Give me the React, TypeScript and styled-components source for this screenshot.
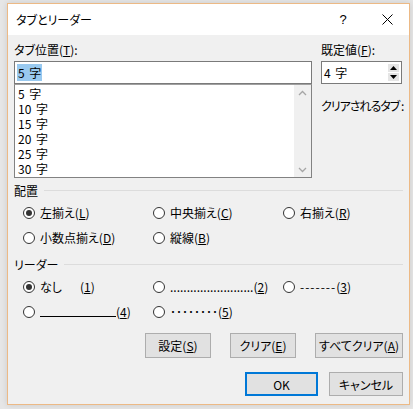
import React from 'react';
import styled, { createGlobalStyle } from 'styled-components';

const GlobalStyle = createGlobalStyle`
  html, body {
    margin: 0;
    padding: 0;
    background: #e6e6e6;
  }
  body {
    font-family: 'Noto Sans CJK JP', 'Noto Sans', sans-serif;
    font-size: 12px;
    color: #000;
    font-feature-settings: 'palt';
  }
`;

const Page = styled.div`
  box-sizing: border-box;
  width: 413px;
  height: 409px;
  padding: 3px 0 0 7px;
`;

const Window = styled.div`
  box-sizing: border-box;
  width: 403px;
  height: 402px;
  border: 1px solid #ecb985;
  background: #f0f0f0;
  display: flex;
  flex-direction: column;
  box-shadow: 0 0 6px rgba(0, 0, 0, 0.12);
`;

const TitleBar = styled.div`
  height: 31px;
  background: #fff;
  display: flex;
  align-items: center;
  padding-left: 8px;
`;

const Title = styled.div`
  flex: 1;
  line-height: 16px;
`;

const CaptionButton = styled.div`
  width: 44px;
  height: 31px;
  display: flex;
  align-items: center;
  justify-content: center;
  font-family: 'Liberation Sans', sans-serif;
  font-size: 13px;
`;

const Body = styled.div`
  padding: 7px 6px 0 6px;
  display: flex;
  flex-direction: column;
`;

const TopArea = styled.div`
  display: grid;
  grid-template-columns: 298px 81px;
  column-gap: 9px;
`;

const Column = styled.div`
  display: flex;
  flex-direction: column;
`;

const Label = styled.div<{ $gap?: number; $tight?: boolean }>`
  line-height: 16px;
  height: 16px;
  margin-top: ${(p) => p.$gap ?? 0}px;
  margin-bottom: 3px;
  white-space: nowrap;
  letter-spacing: ${(p) => (p.$tight ? '-1px' : 'normal')};
`;

const TextBox = styled.div`
  box-sizing: border-box;
  height: 23px;
  border: 1px solid #7a7a7a;
  background: #fff;
  display: flex;
  align-items: center;
  padding-left: 2px;
  word-spacing: 2px;
`;

const Selected = styled.span`
  background: #99c9ef;
  line-height: 17px;
  padding: 0 1px;
`;

const ListBox = styled.div`
  box-sizing: border-box;
  height: 94px;
  border: 1px solid #828282;
  border-top-color: #a0a0a0;
  background: #fff;
  display: flex;
`;

const ListItems = styled.div`
  flex: 1;
  padding: 1px 0 0 3px;
  word-spacing: 2px;
`;

const ListItem = styled.div`
  line-height: 15px;
  height: 15px;
`;

const ScrollBar = styled.div`
  width: 17px;
  background: #f0f0f0;
  display: flex;
  flex-direction: column;
  justify-content: space-between;
  align-items: center;
  padding: 5px 0 4px;
`;

const SpinBox = styled(TextBox)`
  justify-content: space-between;
  padding-right: 2px;
`;

const SpinButtons = styled.div`
  display: flex;
  flex-direction: column;
  gap: 1px;
`;

const SpinButton = styled.div`
  width: 11px;
  height: 8px;
  background: #e5e5e5;
  display: flex;
  align-items: center;
  justify-content: center;
`;

const SectionHead = styled.div<{ $gap: number }>`
  display: flex;
  align-items: center;
  gap: 6px;
  margin-top: ${(p) => p.$gap}px;
  line-height: 16px;
  height: 16px;

  &::after {
    content: '';
    flex: 1;
    height: 1px;
    margin-top: -2px;
    background: #dcdcdc;
  }
`;

const RadioGrid = styled.div`
  display: grid;
  grid-template-columns: 130px 130px 130px;
  grid-auto-rows: 25px;
  padding-left: 9px;
  margin-top: 1px;
`;

const RadioItem = styled.label`
  display: flex;
  align-items: center;
  gap: 5px;
  white-space: nowrap;
`;

const RadioCircle = styled.span<{ $checked?: boolean }>`
  box-sizing: border-box;
  width: 12px;
  height: 12px;
  border-radius: 50%;
  border: 1px solid #333;
  background: #fff;
  display: flex;
  align-items: center;
  justify-content: center;

  &::after {
    content: '';
    display: ${(p) => (p.$checked ? 'block' : 'none')};
    width: 6px;
    height: 6px;
    border-radius: 50%;
    background: #333;
  }
`;

const Gap = styled.span<{ $width: number }>`
  display: inline-block;
  width: ${(p) => p.$width}px;
`;

const Leader = styled.span<{ $spacing?: number }>`
  letter-spacing: ${(p) => p.$spacing ?? 0}px;
`;

const Rule = styled.span<{ $width: number }>`
  display: inline-block;
  width: ${(p) => p.$width}px;
  height: 11px;
  border-bottom: 1px solid #000;
  vertical-align: baseline;
`;

const ButtonRow = styled.div<{ $gap: number; $top: number }>`
  display: flex;
  justify-content: flex-end;
  gap: ${(p) => p.$gap}px;
  margin-top: ${(p) => p.$top}px;
`;

const Button = styled.div<{ $width: number; $height: number; $default?: boolean }>`
  box-sizing: border-box;
  width: ${(p) => p.$width}px;
  height: ${(p) => p.$height}px;
  background: #e1e1e1;
  border: ${(p) => (p.$default ? '2px solid #0078d7' : '1px solid #adadad')};
  display: flex;
  align-items: center;
  justify-content: center;
  white-space: nowrap;
`;

const Chevron = ({ up }: { up?: boolean }) => (
  <svg width="9" height="6" viewBox="0 0 9 6">
    <path
      d={up ? 'M1 5 L4.5 1.5 L8 5' : 'M1 1 L4.5 4.5 L8 1'}
      fill="none"
      stroke="#a6a6a6"
      strokeWidth="1.3"
    />
  </svg>
);

const Triangle = ({ up }: { up?: boolean }) => (
  <svg width="7" height="4" viewBox="0 0 7 4">
    <path d={up ? 'M0 4 L3.5 0 L7 4 Z' : 'M0 0 L3.5 4 L7 0 Z'} fill="#000" />
  </svg>
);

const CloseIcon = () => (
  <svg width="11" height="11" viewBox="0 0 11 11">
    <path d="M0.5 0.5 L10.5 10.5 M10.5 0.5 L0.5 10.5" stroke="#000" strokeWidth="1" />
  </svg>
);

const Radio = ({ checked, children }: { checked?: boolean; children: React.ReactNode }) => (
  <RadioItem>
    <RadioCircle $checked={checked} />
    <span>{children}</span>
  </RadioItem>
);

const stops = ['5 字', '10 字', '15 字', '20 字', '25 字', '30 字'];

const App = () => {
  return (
    <Page>
      <GlobalStyle />
      <Window>
        <TitleBar>
          <Title>タブとリーダー</Title>
          <CaptionButton>?</CaptionButton>
          <CaptionButton>
            <CloseIcon />
          </CaptionButton>
        </TitleBar>
        <Body>
          <TopArea>
            <Column>
              <Label>
                タブ位置(<u>T</u>):
              </Label>
              <TextBox>
                <Selected>5 字</Selected>
              </TextBox>
              <ListBox>
                <ListItems>
                  {stops.map((s) => (
                    <ListItem key={s}>{s}</ListItem>
                  ))}
                </ListItems>
                <ScrollBar>
                  <Chevron up />
                  <Chevron />
                </ScrollBar>
              </ListBox>
            </Column>
            <Column>
              <Label>
                既定値(<u>F</u>):
              </Label>
              <SpinBox>
                <span>4 字</span>
                <SpinButtons>
                  <SpinButton>
                    <Triangle up />
                  </SpinButton>
                  <SpinButton>
                    <Triangle />
                  </SpinButton>
                </SpinButtons>
              </SpinBox>
              <Label $gap={14} $tight>
                クリアされるタブ :
              </Label>
            </Column>
          </TopArea>

          <SectionHead $gap={5}>配置</SectionHead>
          <RadioGrid>
            <Radio checked>
              左揃え(<u>L</u>)
            </Radio>
            <Radio>
              中央揃え(<u>C</u>)
            </Radio>
            <Radio>
              右揃え(<u>R</u>)
            </Radio>
            <Radio>
              小数点揃え(<u>D</u>)
            </Radio>
            <Radio>
              縦線(<u>B</u>)
            </Radio>
          </RadioGrid>

          <SectionHead $gap={7}>リーダー</SectionHead>
          <RadioGrid>
            <Radio checked>
              なし<Gap $width={18} />(<u>1</u>)
            </Radio>
            <Radio>
              <Leader>{'.'.repeat(25)}</Leader>(<u>2</u>)
            </Radio>
            <Radio>
              <Leader $spacing={1}>{'-'.repeat(7)}</Leader>(<u>3</u>)
            </Radio>
            <Radio>
              <Rule $width={76} />(<u>4</u>)
            </Radio>
            <Radio>
              <Leader>{'･'.repeat(8)}</Leader>(<u>5</u>)
            </Radio>
          </RadioGrid>

          <ButtonRow $gap={19} $top={9}>
            <Button $width={66} $height={25}>
              設定(<u>S</u>)
            </Button>
            <Button $width={66} $height={25}>
              クリア(<u>E</u>)
            </Button>
            <Button $width={88} $height={25}>
              すべてクリア(<u>A</u>)
            </Button>
          </ButtonRow>
          <ButtonRow $gap={11} $top={14}>
            <Button $width={73} $height={24} $default>
              OK
            </Button>
            <Button $width={74} $height={24}>
              キャンセル
            </Button>
          </ButtonRow>
        </Body>
      </Window>
    </Page>
  );
};

export default App;
